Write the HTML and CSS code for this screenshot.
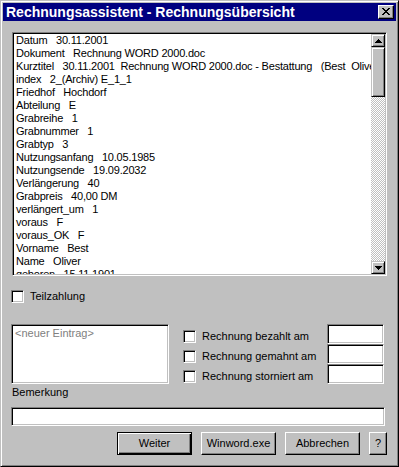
FILE: index.html
```html
<!DOCTYPE html>
<html lang="de">
<head>
<meta charset="utf-8">
<title>Rechnungsassistent - Rechnungsübersicht</title>
<link rel="stylesheet" href="styles.css">
</head>
<body>
<div class="window">
  <div class="titlebar">
    <span class="title">Rechnungsassistent - Rechnungsübersicht</span>
    <span class="close">
      <svg width="8" height="7" viewBox="0 0 8 7" shape-rendering="crispEdges">
        <path d="M0 0h2v1h-2zM6 0h2v1h-2zM1 1h2v1h-2zM5 1h2v1h-2zM2 2h4v1h-4zM3 3h2v1h-2zM2 4h4v1h-4zM1 5h2v1h-2zM5 5h2v1h-2zM0 6h2v1h-2zM6 6h2v1h-2z" fill="#000"/>
      </svg>
    </span>
  </div>
  <div class="content">
    <div class="listbox">
      <div class="listtext">
        <div class="line">Datum   30.11.2001</div>
        <div class="line">Dokument   Rechnung WORD 2000.doc</div>
        <div class="line">Kurztitel   30.11.2001  Rechnung WORD 2000.doc - Bestattung   (Best  Oliver)</div>
        <div class="line">index   2_(Archiv) E_1_1</div>
        <div class="line">Friedhof   Hochdorf</div>
        <div class="line">Abteilung   E</div>
        <div class="line">Grabreihe   1</div>
        <div class="line">Grabnummer   1</div>
        <div class="line">Grabtyp   3</div>
        <div class="line">Nutzungsanfang   10.05.1985</div>
        <div class="line">Nutzungsende   19.09.2032</div>
        <div class="line">Verlängerung   40</div>
        <div class="line">Grabpreis   40,00 DM</div>
        <div class="line">verlängert_um   1</div>
        <div class="line">voraus   F</div>
        <div class="line">voraus_OK   F</div>
        <div class="line">Vorname   Best</div>
        <div class="line">Name   Oliver</div>
        <div class="line">geboren   15.11.1901</div>
      </div>
      <div class="scrollbar">
        <div class="sbtn">
          <svg width="7" height="4" viewBox="0 0 7 4" shape-rendering="crispEdges"><path d="M3 0h1v1h-1zM2 1h3v1h-3zM1 2h5v1h-5zM0 3h7v1h-7z" fill="#000"/></svg>
        </div>
        <div class="thumb"></div>
        <div class="track"></div>
        <div class="sbtn">
          <svg width="7" height="4" viewBox="0 0 7 4" shape-rendering="crispEdges"><path d="M0 0h7v1h-7zM1 1h5v1h-5zM2 2h3v1h-3zM3 3h1v1h-1z" fill="#000"/></svg>
        </div>
      </div>
    </div>

    <div class="check teil"><span class="box"></span><span class="clabel">Teilzahlung</span></div>

    <div class="lower">
      <div class="field entries"><span class="placeholder">&lt;neuer Eintrag&gt;</span></div>
      <div class="status">
        <div class="srow"><span class="box"></span><span class="slabel">Rechnung bezahlt am</span><span class="field date"></span></div>
        <div class="srow"><span class="box"></span><span class="slabel">Rechnung gemahnt am</span><span class="field date"></span></div>
        <div class="srow"><span class="box"></span><span class="slabel">Rechnung storniert am</span><span class="field date"></span></div>
      </div>
    </div>

    <div class="blabel">Bemerkung</div>
    <div class="field remark"></div>

    <div class="buttons">
      <div class="btn default">Weiter</div>
      <div class="btn">Winword.exe</div>
      <div class="btn">Abbrechen</div>
      <div class="btn help">?</div>
    </div>
  </div>
</div>
</body>
</html>
```

FILE: styles.css
```css
* { box-sizing: border-box; }
html, body { margin: 0; padding: 0; background: #c0c0c0; }
body {
  font-family: "Liberation Sans", Arial, sans-serif;
  font-size: 11px;
  color: #000;
}
.window {
  width: 399px;
  height: 467px;
  background: #c0c0c0;
  border: 1px solid;
  border-color: #c0c0c0 #000 #000 #c0c0c0;
  box-shadow: inset 1px 1px #fff, inset -1px -1px #808080;
  padding: 2px;
}
.titlebar {
  height: 18px;
  background: #000080;
  display: flex;
  align-items: center;
  justify-content: space-between;
  padding-left: 3px;
}
.title {
  color: #fff;
  font-weight: bold;
  font-size: 14px;
  line-height: 18px;
  white-space: nowrap;
}
.close {
  width: 16px;
  height: 14px;
  margin-right: 2px;
  background: #c0c0c0;
  border: 1px solid;
  border-color: #fff #000 #000 #fff;
  box-shadow: inset -1px -1px #808080;
  display: flex;
  align-items: center;
  justify-content: center;
}
.close svg { display: block; margin-top: -1px; }
.content {
  padding: 11px 9px 0 8px;
  display: flex;
  flex-direction: column;
}
.listbox {
  margin-left: 1px;
  height: 244px;
  background: #fff;
  border: 1px solid;
  border-color: #808080 #fff #fff #808080;
  box-shadow: inset 1px 1px #000, inset -1px -1px #c0c0c0;
  padding: 1px;
  display: flex;
}
.listtext {
  flex: 1;
  overflow: hidden;
  padding: 0 2px;
  min-width: 0;
  letter-spacing: -0.2px;
}
.line {
  white-space: pre;
  line-height: 13px;
  height: 13px;
}
.scrollbar {
  width: 14px;
  display: flex;
  flex-direction: column;
}
.sbtn, .thumb {
  background: #c0c0c0;
  border: 1px solid;
  border-color: #c0c0c0 #000 #000 #c0c0c0;
  box-shadow: inset 1px 1px #fff, inset -1px -1px #808080;
}
.sbtn {
  height: 13px;
  display: flex;
  align-items: center;
  justify-content: center;
}
.sbtn svg { display: block; }
.thumb { height: 50px; }
.track {
  flex: 1;
  background: repeating-conic-gradient(#c0c0c0 0 25%, #fff 0 50%) 0 0 / 2px 2px;
}
.check { display: flex; align-items: flex-start; }
.box {
  width: 13px;
  height: 13px;
  flex: none;
  background: #fff;
  border: 1px solid;
  border-color: #808080 #fff #fff #808080;
  box-shadow: inset 1px 1px #000, inset -1px -1px #c0c0c0;
}
.teil { margin-top: 14px; }
.clabel { margin-left: 6px; line-height: 13px; }
.lower {
  margin-top: 21px;
  display: flex;
  height: 60px;
  margin-right: 3px;
}
.field {
  background: #fff;
  border: 1px solid;
  border-color: #808080 #fff #fff #808080;
  box-shadow: inset 1px 1px #000, inset -1px -1px #c0c0c0;
}
.entries {
  width: 158px;
  height: 60px;
  padding: 2px 3px;
  line-height: 13px;
}
.placeholder { color: #808080; }
.status {
  margin-left: 14px;
  flex: 1;
  display: flex;
  flex-direction: column;
}
.srow {
  height: 20px;
  display: flex;
  align-items: flex-start;
}
.srow .box { margin-top: 6px; }
.slabel {
  flex: 1;
  margin-left: 6px;
  margin-top: 6px;
  line-height: 13px;
  white-space: nowrap;
}
.date { width: 57px; height: 20px; flex: none; }
.blabel {
  margin-top: 2px;
  padding-left: 1px;
  line-height: 13px;
}
.remark {
  margin-top: 8px;
  height: 19px;
  margin-right: 2px;
}
.buttons {
  margin-top: 6px;
  display: flex;
  justify-content: flex-end;
  gap: 9px;
}
.btn {
  width: 75px;
  height: 23px;
  background: #c0c0c0;
  border: 1px solid;
  border-color: #fff #000 #000 #fff;
  box-shadow: inset -1px -1px #808080;
  display: flex;
  align-items: center;
  justify-content: center;
  line-height: 13px;
}
.btn.default {
  border: 1px solid #000;
  box-shadow: inset 1px 1px #fff, inset -1px -1px #000, inset -2px -2px #808080;
}
.btn.help { width: 18px; }
```
